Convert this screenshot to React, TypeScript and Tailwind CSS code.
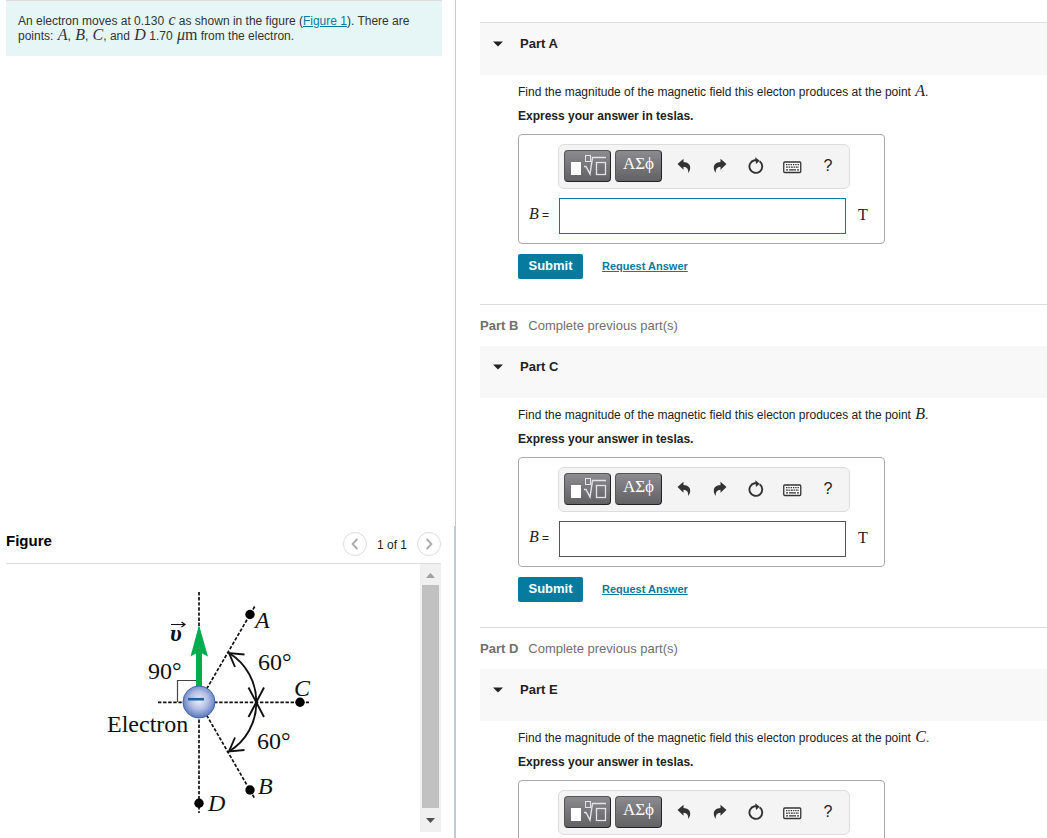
import React, { useState } from "react";

function MathVar({ children }: { children: React.ReactNode }) {
  return (
    <span className="ml-px font-['Liberation_Serif',serif] text-base leading-[0px] italic">
      {children}
    </span>
  );
}

function TemplatesIcon() {
  return (
    <svg width="38" height="24" viewBox="0 0 38 24" aria-hidden="true">
      <rect x="2" y="8" width="10" height="13" fill="#fff" />
      <g fill="none" stroke="#e4e4e6" strokeWidth="1">
        <rect x="16.5" y="1.5" width="5" height="6" />
        <path d="M15 12.500h2l4 7.500 2.500-16.500H37" strokeWidth="1.400" />
        <rect x="27.500" y="8.500" width="9" height="12" strokeWidth="1.300" />
      </g>
    </svg>
  );
}

function UndoIcon({ flip = false }: { flip?: boolean }) {
  return (
    <svg width="14" height="16" viewBox="0 0 14 16" aria-hidden="true">
      <path
        transform={flip ? "matrix(-1 0 0 1 14 0)" : undefined}
        d="M0.500 6 6.500 0.800v3.100c4.200 0.100 6.800 2.300 6.700 5.900 0 2-0.800 3.800-2 5.200 0.300-3.700-0.900-6-4.700-6.300v3Z"
        fill="#333"
      />
    </svg>
  );
}

function ResetIcon() {
  return (
    <svg width="16" height="18" viewBox="0 0 16 18" aria-hidden="true">
      <path
        d="M11.600 4.300A6.400 6.400 0 1 1 6.600 3.200L9 3.100"
        fill="none"
        stroke="#333"
        strokeWidth="1.900"
      />
      <path d="M7.200 0.300 11.700 3.700 8 7Z" fill="#333" />
    </svg>
  );
}

function KeyboardIcon() {
  return (
    <svg width="19" height="13" viewBox="0 0 19 13" aria-hidden="true">
      <rect x="0.750" y="1" width="17" height="10.500" rx="1" fill="#fff" stroke="#333" strokeWidth="1.300" />
      <g stroke="#333" strokeWidth="1.300">
        <path d="M3 3.700h13" strokeDasharray="1.400 0.900" />
        <path d="M3 6.200h13" strokeDasharray="1.800 0.700" />
        <path d="M3 8.900h2M6 8.900h7M14 8.900h2" />
      </g>
    </svg>
  );
}

const keyClass =
  "flex h-8 w-[47px] items-center justify-center rounded border border-[#555] border-r-[#222] border-b-[#222] bg-gradient-to-b from-[#8b8b90] to-[#626264] text-white";
const toolClass = "flex h-8 w-9 items-center justify-center";

function AnswerPart({
  part,
  point,
  active = false,
  topLine = false,
}: {
  part: string;
  point: string;
  active?: boolean;
  topLine?: boolean;
}) {
  const [open, setOpen] = useState(true);
  const [value, setValue] = useState("");
  const id = `answer-${part}`;
  return (
    <section>
      <h2 className={`bg-[#f8f8f8] pb-[10px] ${topLine ? "border-t border-[#ddd]" : ""}`}>
        <button
          type="button"
          aria-expanded={open}
          onClick={() => setOpen(!open)}
          className="flex h-[42px] w-full items-center gap-4 pl-3 text-[13px] font-bold text-[#222]"
        >
          <svg width="12" height="6" viewBox="0 0 12 6" aria-hidden="true">
            <path d="M1 0.500h10L6 5.500Z" fill="#222" />
          </svg>
          Part {part}
        </button>
      </h2>
      {open && (
        <div className="pb-[25px] pl-[38px] pt-[7px]">
          <p className="text-xs leading-5">
            Find the magnitude of the magnetic field this electon produces at the point{" "}
            <MathVar>{point}</MathVar>.
          </p>
          <p className="mt-1 text-xs leading-5 font-bold">Express your answer in teslas.</p>
          <div className="mt-2 w-[367px] max-w-full rounded border border-[#a9a9a9] py-[9px]">
            <div
              role="toolbar"
              aria-label="Equation tools"
              className="ml-[39px] flex h-[45px] w-[292px] items-center rounded-md border border-[#ddd] bg-[#f4f4f4] pb-0.5 pl-[5px]"
            >
              <button type="button" aria-label="Templates" className={keyClass}>
                <TemplatesIcon />
              </button>
              <button
                type="button"
                aria-label="Greek symbols"
                className={`${keyClass} ml-1 pb-1 font-['Liberation_Serif',serif] text-[17px]`}
              >
                ΑΣϕ
              </button>
              <div className="ml-1 flex">
                <button type="button" aria-label="Undo" className={toolClass}>
                  <UndoIcon />
                </button>
                <button type="button" aria-label="Redo" className={toolClass}>
                  <UndoIcon flip />
                </button>
                <button type="button" aria-label="Reset" className={toolClass}>
                  <ResetIcon />
                </button>
                <button type="button" aria-label="Keyboard shortcuts" className={`${toolClass} pt-1`}>
                  <KeyboardIcon />
                </button>
                <button type="button" aria-label="Help" className={`${toolClass} text-base`}>
                  ?
                </button>
              </div>
            </div>
            <div className="mt-[9px] flex items-center">
              <label htmlFor={id} className="w-10 pb-0.5 pl-[9px] text-xs whitespace-nowrap">
                <MathVar>B</MathVar> =
              </label>
              <input
                id={id}
                type="text"
                value={value}
                onChange={(e) => setValue(e.target.value)}
                className={`h-9 w-[287px] border bg-white px-2 text-sm outline-none focus:border-[#077b9d] ${active ? "border-[#077b9d]" : "border-[#555]"}`}
              />
              <span className="ml-3 pb-0.5 font-['Liberation_Serif',serif] text-base leading-none">T</span>
            </div>
          </div>
          <div className="mt-[10px] flex items-center gap-[19px]">
            <button
              type="button"
              className="h-[25px] w-[65px] rounded-xs bg-[#077b9d] pb-px text-[13px] font-bold text-white"
            >
              Submit
            </button>
            <a href="#request" className="text-[11px] font-bold text-[#077b9d] underline">
              Request Answer
            </a>
          </div>
        </div>
      )}
    </section>
  );
}

function LockedPart({ part }: { part: string }) {
  return (
    <section className="flex h-[42px] items-center gap-[10px] border-t border-[#ddd] text-[13px] text-[#707070]">
      <h2 className="font-bold">Part {part}</h2>
      <p>Complete previous part(s)</p>
    </section>
  );
}

function ElectronDiagram() {
  return (
    <svg
      className="block h-full min-w-0 flex-1"
      viewBox="6 564 414 268"
      role="img"
      aria-label="Electron moving upward with points A, B, C and D around it"
    >
      <defs>
        <radialGradient id="ball" cx="0.5" cy="0.45" r="0.56">
          <stop offset="0" stopColor="#eef0fa" />
          <stop offset="0.500" stopColor="#b3bee4" />
          <stop offset="1" stopColor="#5474bb" />
        </radialGradient>
      </defs>
      <g stroke="#111" strokeWidth="1.700" strokeDasharray="3.400 1.700" fill="none">
        <path d="M199 592V813" />
        <path d="M158 702.300H309" />
        <path d="M199 702 255 606" />
        <path d="M199 702 255 799" />
      </g>
      <path d="M177.500 702V680.500H196" fill="none" stroke="#444" strokeWidth="1.200" />
      <g stroke="#111" strokeWidth="1.900" fill="none">
        <path d="M229 653A57 57 0 0 1 256.300 702.300A57 57 0 0 1 229 751.500" />
        <path d="M244.500 654.500 229 653 235 667" />
        <path d="M244.500 750 229 751.500 235 737.500" />
        <path d="M248.500 687.500 256.300 702.300 264 687.500" />
        <path d="M248.500 717 256.300 702.300 264 717" />
      </g>
      <path d="M196 688V653.500L190.500 656.500 199 625 208 656.500 202 653.500V688Z" fill="#00ac4e" />
      <circle cx="199" cy="702" r="16" fill="url(#ball)" stroke="#4265ad" strokeWidth="1" />
      <path d="M188 699.200H204" stroke="#1764ad" strokeWidth="2.600" />
      <g fill="#000">
        <circle cx="250" cy="614.500" r="4.700" />
        <circle cx="250" cy="790" r="4.700" />
        <circle cx="300" cy="702.300" r="4.700" />
        <circle cx="199" cy="803.300" r="4.700" />
      </g>
      <g fill="#111" fontFamily="Liberation Serif, serif" fontSize="24">
        <text x="148" y="679">90°</text>
        <text x="258" y="670">60°</text>
        <text x="257" y="749">60°</text>
        <text x="107" y="732">Electron</text>
        <g fontStyle="italic">
          <text x="255" y="628">A</text>
          <text x="258" y="794">B</text>
          <text x="294" y="696">C</text>
          <text x="208" y="811">D</text>
          <text x="170" y="641" fontWeight="bold">υ</text>
        </g>
      </g>
      <path d="M171 624.500H185M181.500 622 185 624.500 181.500 627" fill="none" stroke="#111" strokeWidth="1.200" />
    </svg>
  );
}

const pagerClass =
  "flex size-6 items-center justify-center rounded-full border border-[#ddd] text-[#aaa]";

export default function App() {
  return (
    <div className="flex h-screen overflow-hidden bg-white font-['Liberation_Sans',Arial,sans-serif] text-[#222]">
      <aside className="flex w-[456px] shrink-0 flex-col justify-between">
        <div className="flex-1 border-r border-[#ccc] pr-[13px] pl-1.5">
          <div className="h-14 border-t border-[#ddd] bg-[#e6f6f7] px-3 pt-[13px] text-xs leading-[15px] text-[#333]">
            An electron moves at 0.130 <MathVar>c</MathVar> as shown in the figure (
            <a href="#figure" className="text-[#077b9d] underline">
              Figure 1
            </a>
            ). There are points: <MathVar>A</MathVar>, <MathVar>B</MathVar>, <MathVar>C</MathVar>, and{" "}
            <MathVar>D</MathVar> 1.70 <MathVar>μ</MathVar>
            <span className="font-['Liberation_Serif',serif] text-base leading-[0px]">m</span> from the
            electron.
          </div>
        </div>
        <section id="figure" className="border-r-2 border-[#b9cbdc] pr-[13px] pb-1.5 pl-1.5">
          <div className="flex h-[38px] items-center justify-between border-b border-[#ddd]">
            <h2 className="pb-1.5 text-[15px] font-bold text-black">Figure</h2>
            <div className="flex items-center gap-[10px] pb-px text-xs">
              <button type="button" aria-label="Previous figure" className={pagerClass}>
                <svg width="8" height="12" viewBox="0 0 8 12" fill="none" stroke="currentColor" strokeWidth="1.800" aria-hidden="true">
                  <path d="M6.500 1 1.500 6l5 5" />
                </svg>
              </button>
              <span className="pt-0.5">1 of 1</span>
              <button type="button" aria-label="Next figure" className={pagerClass}>
                <svg width="8" height="12" viewBox="0 0 8 12" fill="none" stroke="currentColor" strokeWidth="1.800" aria-hidden="true">
                  <path d="M1.500 1l5 5-5 5" />
                </svg>
              </button>
            </div>
          </div>
          <div className="flex h-[268px]">
            <ElectronDiagram />
            <div className="flex w-[21px] shrink-0 flex-col items-center bg-[#f0f0f0]">
              <svg width="9" height="21" viewBox="0 0 9 21" aria-hidden="true">
                <path d="M0 14 4.500 9 9 14Z" fill="#a0a0a0" />
              </svg>
              <div className="w-[17px] flex-1 bg-[#c1c1c1]" />
              <svg width="9" height="24" viewBox="0 0 9 24" aria-hidden="true">
                <path d="M0 10H9L4.500 15Z" fill="#505050" />
              </svg>
            </div>
          </div>
        </section>
      </aside>
      <main className="min-w-0 flex-1 pt-[22px] pl-6">
        <AnswerPart part="A" point="A" active topLine />
        <LockedPart part="B" />
        <AnswerPart part="C" point="B" />
        <LockedPart part="D" />
        <AnswerPart part="E" point="C" />
      </main>
    </div>
  );
}
